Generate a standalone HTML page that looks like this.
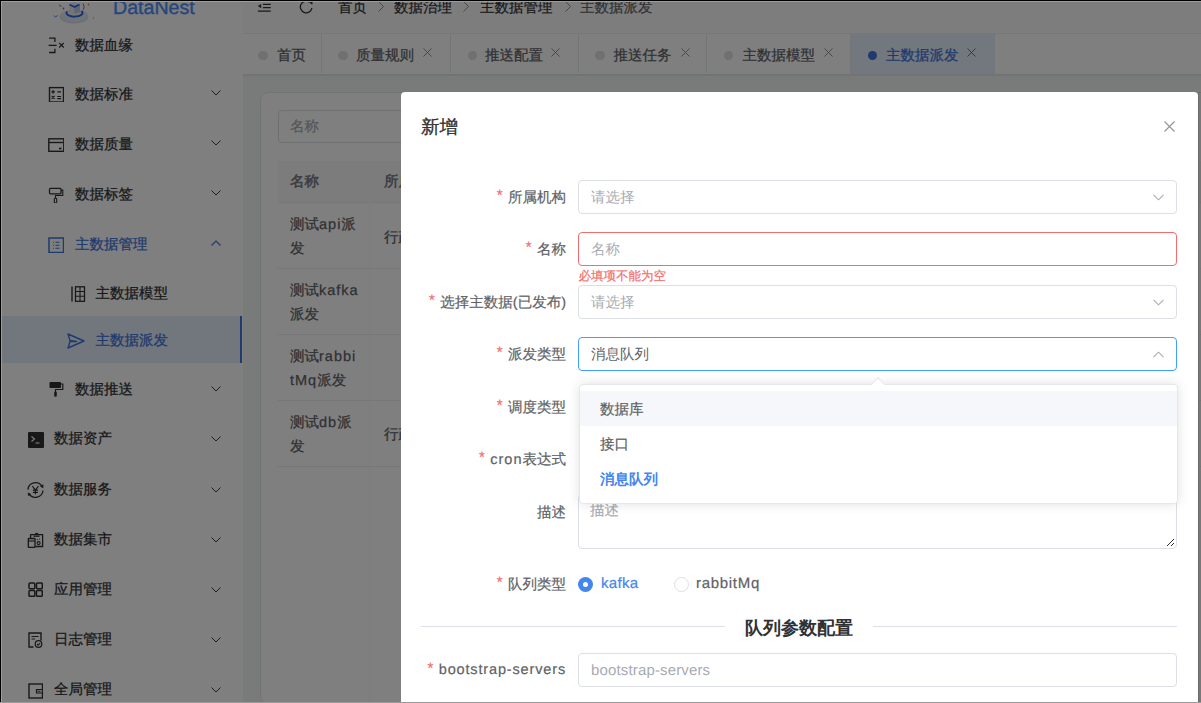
<!DOCTYPE html>
<html><head><meta charset="utf-8">
<style>
*{box-sizing:border-box;margin:0;padding:0}
html,body{width:1201px;height:703px;overflow:hidden;background:#fff;font-family:"Liberation Sans",sans-serif;color:#303133;-webkit-text-stroke-width:0.2px;text-rendering:geometricPrecision}
.a{position:absolute;white-space:nowrap}
#side{position:absolute;left:0;top:0;width:243px;height:703px;background:#fff;border-right:none}
#main{position:absolute;left:243px;top:0;width:958px;height:703px;background:#f3f4f5}
.mi{position:absolute;font-size:14.5px;line-height:20px;color:#303133;margin-top:0.7px}
.ic{position:absolute;width:16px;height:16px}
.chev{position:absolute;left:211px;width:10px;height:6px}
.tab{position:absolute;top:34px;height:39px;border-right:1px solid #e8eaee;background:#fff}
.tab .d{position:absolute;top:50.5px;margin-top:-34px;width:9.5px;height:9.5px;border-radius:50%;background:#dfe1e5}
.tab .t{position:absolute;top:11.7px;font-size:14.5px;line-height:20px;color:#606266}
.tab .x{position:absolute;top:14.4px;width:9px;height:9px}
#ov{position:absolute;left:0;top:0;width:1201px;height:703px;background:rgba(0,0,0,.5)}
#modal{position:absolute;left:401px;top:92px;width:797px;height:640px;background:#fff;border-radius:4px}
.lbl{position:absolute;right:0;font-size:15px;line-height:20px;color:#606266;text-align:right}
.req{color:#f56c6c;margin-right:5.5px;font-size:15px;position:relative;top:-1.5px}
.L1{letter-spacing:1px}
.mi,.tab .t{-webkit-text-stroke-width:0.25px}
.inp{position:absolute;left:578px;width:599px;height:33.5px;border:1px solid #dcdfe6;border-radius:4px;background:#fff}
.ph{position:absolute;left:12px;top:7.2px;font-size:14.5px;line-height:20px;color:#a8abb2;-webkit-text-stroke-width:0}
</style></head><body>

<div id="side">
  <!-- logo -->
  <svg class="a" style="left:50px;top:0" width="50" height="28" viewBox="0 0 50 28">
    <defs><radialGradient id="pg" cx="50%" cy="40%" r="60%"><stop offset="0" stop-color="#f4f6fa"/><stop offset="0.7" stop-color="#e3e8f0"/><stop offset="1" stop-color="#cfd6e2"/></radialGradient></defs>
    <ellipse cx="24" cy="16.5" rx="14.3" ry="7" fill="url(#pg)"/>
    <ellipse cx="24" cy="15" rx="10" ry="4.5" fill="none" stroke="#dfe5ee" stroke-width="1.5"/>
    <path d="M17 11.5A8 3.8 0 1 0 31.5 11" fill="none" stroke="#2f63e6" stroke-width="2"/>
    <path d="M19 4.5L24.5 2L30 4.5V12L24.5 14L19 12Z" fill="#e2e8f3"/>
    <path d="M24.5 7V14L30 12V4.5Z" fill="#c3cde0"/>
    <path d="M19.5 4.5L24.5 7L29.5 4.5" fill="none" stroke="#2f63e6" stroke-width="1.6"/>
    <path d="M9 5l2.5 1.5" stroke="#e0903a" stroke-width="1.2"/>
    <circle cx="38.5" cy="4.5" r="0.9" fill="#e0903a"/>
    <circle cx="13.5" cy="8.5" r="0.9" fill="#4a7ae8"/>
    <path d="M4 15.5l1.5 1.5 2-1.5" fill="none" stroke="#4a7ae8" stroke-width="1"/>
    <path d="M33 3.5q2 3 0.5 6" fill="none" stroke="#4a7ae8" stroke-width="1"/>
    <circle cx="43.5" cy="18" r="0.7" fill="#9aa6c0"/>
  </svg>
  <div class="a" style="left:113px;top:-4px;font-size:19.6px;line-height:24px;color:#4a8cf5;-webkit-text-stroke-width:0.35px">DataNest</div>

  <!-- level-1 items -->
  <svg class="ic" style="left:48px;top:37px;overflow:visible" viewBox="0 0 16 16"><path d="M1.1 1.1H6.9V4.9M0.6 8.3H8.6M6.9 11.7V15.5H1.1" fill="none" stroke="#303133" stroke-width="1.3"/><path d="M11.2 5.9L15.8 10.5M15.8 5.9L11.2 10.5" stroke="#303133" stroke-width="1.2"/></svg>
  <div class="mi" style="left:75px;top:35px">数据血缘</div>

  <svg class="ic" style="left:48px;top:86px" viewBox="0 0 16 16"><rect x="1.5" y="1.6" width="14" height="14.4" fill="none" stroke="#303133" stroke-width="1.4"/><path d="M3.3 5.9h3.6M5.1 4.1v3.6M9.3 5.9h3.7M3.6 9.9l3 3M6.6 9.9l-3 3M9.3 10.5h3.7M9.3 12.6h3.7" stroke="#303133" stroke-width="1.1"/></svg>
  <div class="mi" style="left:75px;top:84px">数据标准</div>
  <svg class="chev" style="top:90px" viewBox="0 0 10 6"><path d="M0.5 0.5L5 5L9.5 0.5" fill="none" stroke="#303133" stroke-width="0.95"/></svg>

  <svg class="ic" style="left:48px;top:137px" viewBox="0 0 16 14"><rect x="0.8" y="0.8" width="15" height="12.5" fill="none" stroke="#303133" stroke-width="1.4"/><path d="M1 4.5h14" stroke="#303133" stroke-width="1.4"/><path d="M11 10.5h2.5" stroke="#303133" stroke-width="1.6"/></svg>
  <div class="mi" style="left:75px;top:134px">数据质量</div>
  <svg class="chev" style="top:140px" viewBox="0 0 10 6"><path d="M0.5 0.5L5 5L9.5 0.5" fill="none" stroke="#303133" stroke-width="0.95"/></svg>

  <svg class="ic" style="left:48px;top:187px" viewBox="0 0 16 16"><rect x="1.5" y="1.3" width="11.5" height="5.5" rx="1" fill="none" stroke="#303133" stroke-width="1.3"/><path d="M13 3h1.8v5.5H7.5v3" fill="none" stroke="#303133" stroke-width="1.1"/><rect x="6.3" y="11" width="2.4" height="5" rx="1.2" fill="none" stroke="#303133" stroke-width="1.1"/></svg>
  <div class="mi" style="left:75px;top:184px">数据标签</div>
  <svg class="chev" style="top:190px" viewBox="0 0 10 6"><path d="M0.5 0.5L5 5L9.5 0.5" fill="none" stroke="#303133" stroke-width="0.95"/></svg>

  <svg class="ic" style="left:48px;top:237px" viewBox="0 0 16 16"><rect x="1" y="1" width="14.5" height="14.5" fill="none" stroke="#3c74dc" stroke-width="1.5"/><path d="M5 5.3h1M7.5 5.3h4M5 8.3h1M7.5 8.3h4M5 11.3h1M7.5 11.3h4" stroke="#3c74dc" stroke-width="1.1"/></svg>
  <div class="mi" style="left:75px;top:234px;color:#3c74dc">主数据管理</div>
  <svg class="chev" style="top:240px" viewBox="0 0 10 6"><path d="M0.5 5.5L5 1L9.5 5.5" fill="none" stroke="#3c74dc" stroke-width="1.1"/></svg>

  <svg class="ic" style="left:70px;top:286px" viewBox="0 0 14 16"><path d="M1 0.5v15" stroke="#303133" stroke-width="1.4"/><rect x="4.5" y="0.8" width="9" height="14.5" fill="none" stroke="#303133" stroke-width="1.3"/><path d="M9 1v14M4.5 5.5h9M4.5 10.3h9" stroke="#303133" stroke-width="1.1"/></svg>
  <div class="mi" style="left:95.5px;top:283px">主数据模型</div>

  <div class="a" style="left:0;top:316px;width:240px;height:47px;background:#e5ecfb"></div>
  <div class="a" style="left:240px;top:316px;width:2px;height:47px;background:#3c74dc"></div>
  <svg class="ic" style="left:67px;top:333px;width:18px" viewBox="0 0 18 16"><path d="M1 1L17 8L1 15L3 8.5H9.5L3 7.5Z" fill="none" stroke="#3c74dc" stroke-width="1.4" stroke-linejoin="round"/></svg>
  <div class="mi" style="left:95.5px;top:330px;color:#3c74dc">主数据派发</div>

  <svg class="ic" style="left:48px;top:381px" viewBox="0 0 16 16"><rect x="1.5" y="1" width="11.5" height="6" rx="1" fill="#303133"/><path d="M13 3h1.8v5.5H7.5v3" fill="none" stroke="#303133" stroke-width="1.2"/><rect x="6.2" y="10.5" width="2.6" height="5.3" rx="1.3" fill="#303133"/></svg>
  <div class="mi" style="left:75px;top:379px">数据推送</div>
  <svg class="chev" style="top:386px" viewBox="0 0 10 6"><path d="M0.5 0.5L5 5L9.5 0.5" fill="none" stroke="#303133" stroke-width="0.95"/></svg>

  <!-- level-0 -->
  <svg class="ic" style="left:28px;top:432px" viewBox="0 0 16 16"><rect x="0" y="0" width="16" height="16" rx="1" fill="#303133"/><path d="M3.5 4.5l3 2.5-3 2.5" fill="none" stroke="#fff" stroke-width="1.1"/><path d="M7.5 11h4" stroke="#fff" stroke-width="1.1"/></svg>
  <div class="mi" style="left:54px;top:428px">数据资产</div>
  <svg class="chev" style="top:436px" viewBox="0 0 10 6"><path d="M0.5 0.5L5 5L9.5 0.5" fill="none" stroke="#303133" stroke-width="0.95"/></svg>

  <svg class="a" style="left:26px;top:480px" width="19" height="19" viewBox="0 0 19 19"><path d="M1.9 9.6A7.6 7.6 0 0 1 16.0 6.4" fill="none" stroke="#303133" stroke-width="1.3"/><path d="M14.0 6.6L17.4 4.3L17.3 8.3Z" fill="#303133"/><path d="M17.0 10.5A7.6 7.6 0 0 1 2.9 13.6" fill="none" stroke="#303133" stroke-width="1.3"/><path d="M1.6 12.4L5.2 14.0L2.3 16.2Z" fill="#303133"/><path d="M6.3 6L9.4 10.2L12.5 6M9.4 10.2V14.3M6.9 10.2H11.9M6.9 12.4H11.9" fill="none" stroke="#303133" stroke-width="1.2"/></svg>
  <div class="mi" style="left:54px;top:479px">数据服务</div>
  <svg class="chev" style="top:487px" viewBox="0 0 10 6"><path d="M0.5 0.5L5 5L9.5 0.5" fill="none" stroke="#303133" stroke-width="0.95"/></svg>

  <svg class="a" style="left:27px;top:532px" width="17" height="17" viewBox="0 0 17 17"><path d="M3.6 6V2.6H15.6V14.5H8.3" fill="none" stroke="#303133" stroke-width="1.3"/><path d="M6.5 4.2H12.6" stroke="#303133" stroke-width="1.3"/><path d="M8.3 2.6A1.3 1.3 0 0 1 10.9 2.6" fill="none" stroke="#303133" stroke-width="1.2"/><rect x="1.3" y="6.5" width="6.7" height="8.9" rx="0.6" fill="#808080" fill-opacity="0" stroke="#303133" stroke-width="1.3"/><path d="M1.5 9H7.8" stroke="#303133" stroke-width="1.1"/><circle cx="11.6" cy="11.1" r="1.5" fill="none" stroke="#303133" stroke-width="1.1"/><circle cx="10.3" cy="7.6" r="0.6" fill="#303133"/><circle cx="12.6" cy="7.1" r="0.6" fill="#303133"/></svg>
  <div class="mi" style="left:54px;top:529px">数据集市</div>
  <svg class="chev" style="top:537px" viewBox="0 0 10 6"><path d="M0.5 0.5L5 5L9.5 0.5" fill="none" stroke="#303133" stroke-width="0.95"/></svg>

  <svg class="ic" style="left:28px;top:582px;width:15px;height:15px" viewBox="0 0 15 15"><rect x="1" y="1" width="5.8" height="5.8" rx="1" fill="none" stroke="#303133" stroke-width="1.5"/><rect x="8.5" y="1" width="5.8" height="5.8" rx="1" fill="none" stroke="#303133" stroke-width="1.5"/><rect x="1" y="8.5" width="5.8" height="5.8" rx="1" fill="none" stroke="#303133" stroke-width="1.5"/><rect x="8.5" y="8.5" width="5.8" height="5.8" rx="1" fill="none" stroke="#303133" stroke-width="1.5"/></svg>
  <div class="mi" style="left:54px;top:579px">应用管理</div>
  <svg class="chev" style="top:587px" viewBox="0 0 10 6"><path d="M0.5 0.5L5 5L9.5 0.5" fill="none" stroke="#303133" stroke-width="0.95"/></svg>

  <svg class="ic" style="left:28px;top:632px;width:15px;height:16px" viewBox="0 0 15 16"><path d="M5.5 15H1V1h12v7.5" fill="none" stroke="#303133" stroke-width="1.4"/><path d="M3.5 4.5h7M3.5 7h3.5" stroke="#303133" stroke-width="1.2"/><circle cx="10.5" cy="12" r="3.3" fill="none" stroke="#303133" stroke-width="1.2"/><path d="M9 12l1.2 1.2 2-2.2" fill="none" stroke="#303133" stroke-width="1.1"/></svg>
  <div class="mi" style="left:54px;top:629px">日志管理</div>
  <svg class="chev" style="top:637px" viewBox="0 0 10 6"><path d="M0.5 0.5L5 5L9.5 0.5" fill="none" stroke="#303133" stroke-width="0.95"/></svg>

  <svg class="ic" style="left:28px;top:683px;width:15px;height:16px" viewBox="0 0 15 16"><rect x="1" y="1" width="13.5" height="14" fill="none" stroke="#303133" stroke-width="1.4"/><path d="M14 6.5H8.5v3.5H14" fill="none" stroke="#303133" stroke-width="1.2"/><path d="M9.5 8.2h3" stroke="#303133" stroke-width="1"/></svg>
  <div class="mi" style="left:54px;top:679px">全局管理</div>
  <svg class="chev" style="top:687px" viewBox="0 0 10 6"><path d="M0.5 0.5L5 5L9.5 0.5" fill="none" stroke="#303133" stroke-width="0.95"/></svg>
</div>

<div id="main"></div>
<!-- header -->
<div class="a" style="left:243px;top:0;width:958px;height:34px;background:#fbfbfb;border-bottom:1px solid #eceef1"></div>
<svg class="a" style="left:257px;top:0" width="15" height="14" viewBox="0 0 15 14"><path d="M5.9 4.4h7.8M5.9 7.6h7.8M0.9 11.1h12.8M5.9 1.2h7.8" stroke="#303133" stroke-width="1.4"/><path d="M4.2 3.9L0.8 6.1L4.2 8.3z" fill="#303133"/></svg>
<svg class="a" style="left:298px;top:0" width="17" height="16" viewBox="0 0 17 16"><path d="M13.9 8.0A5.8 5.8 0 1 1 11.3 2.1" fill="none" stroke="#303133" stroke-width="1.3"/><path d="M10.2 1.3L14.8 0.9L14.2 4.8Z" fill="#303133"/></svg>
<div class="a" style="left:338px;top:-2px;font-size:14.5px;line-height:20px;color:#303133">首页</div>
<svg class="a" style="left:378px;top:1px" width="6" height="11" viewBox="0 0 6 11"><path d="M0.5 0.5L5.5 5.5L0.5 10.5" fill="none" stroke="#909399" stroke-width="1"/></svg>
<div class="a" style="left:394px;top:-2px;font-size:14.5px;line-height:20px;color:#303133">数据治理</div>
<svg class="a" style="left:463px;top:1px" width="6" height="11" viewBox="0 0 6 11"><path d="M0.5 0.5L5.5 5.5L0.5 10.5" fill="none" stroke="#909399" stroke-width="1"/></svg>
<div class="a" style="left:480px;top:-2px;font-size:14.5px;line-height:20px;color:#303133">主数据管理</div>
<svg class="a" style="left:565px;top:1px" width="6" height="11" viewBox="0 0 6 11"><path d="M0.5 0.5L5.5 5.5L0.5 10.5" fill="none" stroke="#909399" stroke-width="1"/></svg>
<div class="a" style="left:580px;top:-2px;font-size:14.5px;line-height:20px;color:#606266">主数据派发</div>

<!-- tabs -->
<div class="a" style="left:243px;top:34px;width:958px;height:41.5px;background:#fff;border-bottom:2.5px solid #e4e6ea"></div>
<div class="tab" style="left:243px;width:79px"><span class="d" style="left:15px"></span><span class="t" style="left:34px">首页</span></div>
<div class="tab" style="left:322px;width:129px"><span class="d" style="left:16px"></span><span class="t" style="left:34px">质量规则</span><svg class="x" style="left:101px" viewBox="0 0 9 9"><path d="M0.5 0.5l8 8M8.5 0.5l-8 8" stroke="#909399" stroke-width="1"/></svg></div>
<div class="tab" style="left:451px;width:128px"><span class="d" style="left:16.5px"></span><span class="t" style="left:34px">推送配置</span><svg class="x" style="left:100px" viewBox="0 0 9 9"><path d="M0.5 0.5l8 8M8.5 0.5l-8 8" stroke="#909399" stroke-width="1"/></svg></div>
<div class="tab" style="left:579px;width:128px"><span class="d" style="left:16px"></span><span class="t" style="left:34.5px">推送任务</span><svg class="x" style="left:101.5px" viewBox="0 0 9 9"><path d="M0.5 0.5l8 8M8.5 0.5l-8 8" stroke="#909399" stroke-width="1"/></svg></div>
<div class="tab" style="left:707px;width:144px"><span class="d" style="left:16.75px"></span><span class="t" style="left:35.5px">主数据模型</span><svg class="x" style="left:116.75px" viewBox="0 0 9 9"><path d="M0.5 0.5l8 8M8.5 0.5l-8 8" stroke="#909399" stroke-width="1"/></svg></div>
<div class="tab" style="left:851px;width:144px;height:39.5px;background:#e6eefc;border-right:none"><span class="d" style="left:16.5px;background:#3c74dc"></span><span class="t" style="left:35px;color:#3c74dc">主数据派发</span><svg class="x" style="left:116px" viewBox="0 0 9 9"><path d="M0.5 0.5l8 8M8.5 0.5l-8 8" stroke="#3c74dc" stroke-width="1"/></svg></div>

<!-- card -->
<div class="a" style="left:260px;top:92px;width:960px;height:612px;background:#fff;border:1px solid #e4e7ed;border-radius:8px"></div>
<div class="a" style="left:278px;top:110px;width:300px;height:33px;border:1px solid #dcdfe6;border-radius:4px"></div>
<div class="a" style="left:290px;top:117px;font-size:14.5px;line-height:20px;color:#a8abb2">名称</div>
<div class="a" style="left:278px;top:161px;width:940px;height:42px;background:#f8f9fb;border-bottom:1px solid #ebeef5"></div>
<div class="a" style="left:290px;top:172px;font-size:14.5px;line-height:20px;color:#7d8086;font-weight:bold;-webkit-text-stroke-width:0">名称</div>
<div class="a" style="left:384px;top:172px;font-size:14.5px;line-height:20px;color:#7d8086;font-weight:bold;-webkit-text-stroke-width:0">所属机构</div>
<div class="a" style="left:278px;top:268px;width:940px;height:1px;background:#ebeef5"></div>
<div class="a" style="left:278px;top:334px;width:940px;height:1px;background:#ebeef5"></div>
<div class="a" style="left:278px;top:400px;width:940px;height:1px;background:#ebeef5"></div>
<div class="a" style="left:278px;top:466px;width:940px;height:1px;background:#ebeef5"></div>
<div class="a" style="left:369px;top:161px;width:1px;height:540px;background:#f7f8fa"></div>
<div class="a" style="left:290px;top:213px;font-size:14.5px;line-height:24px;color:#606266;-webkit-text-stroke-width:0.25px;white-space:normal;width:72px">测试<span class="L1">api</span>派<br>发</div>
<div class="a" style="left:290px;top:279px;font-size:14.5px;line-height:24px;color:#606266;-webkit-text-stroke-width:0.25px">测试<span class="L1">kafka</span><br>派发</div>
<div class="a" style="left:290px;top:345px;font-size:14.5px;line-height:24px;color:#606266;-webkit-text-stroke-width:0.25px">测试<span class="L1">rabbi</span><br><span class="L1">tMq</span>派发</div>
<div class="a" style="left:290px;top:411px;font-size:14.5px;line-height:24px;color:#606266;-webkit-text-stroke-width:0.25px">测试<span class="L1">db</span>派<br>发</div>
<div class="a" style="left:384px;top:226px;font-size:14.5px;line-height:24px;color:#606266;-webkit-text-stroke-width:0.25px">行政</div>
<div class="a" style="left:384px;top:423px;font-size:14.5px;line-height:24px;color:#606266;-webkit-text-stroke-width:0.25px">行政</div>

<div id="ov"></div>
<div id="modal"></div>
<div class="a" style="left:421px;top:116px;font-size:18.5px;line-height:22px;color:#303133;-webkit-text-stroke-width:0.3px">新增</div>
<svg class="a" style="left:1164px;top:121px" width="11" height="11" viewBox="0 0 11 11"><path d="M0.5 0.5l10 10M10.5 0.5l-10 10" stroke="#909399" stroke-width="1.1"/></svg>

<div class="a" style="left:400px;top:187.8px;width:166px;text-align:right;font-size:14.5px;line-height:20px;color:#606266"><span class="req">*</span>所属机构</div>
<div class="inp" style="top:180px"><span class="ph">请选择</span><svg class="a" style="left:574px;top:13px" width="11" height="7" viewBox="0 0 11 7"><path d="M0.5 0.8L5.5 5.8L10.5 0.8" fill="none" stroke="#a8abb2" stroke-width="1.1"/></svg></div>

<div class="a" style="left:400px;top:239.8px;width:166px;text-align:right;font-size:14.5px;line-height:20px;color:#606266"><span class="req">*</span>名称</div>
<div class="inp" style="top:232px;border-color:#f56c6c"><span class="ph">名称</span></div>
<div class="a" style="left:578.5px;top:267.7px;font-size:12.5px;line-height:16px;color:#f56c6c">必填项不能为空</div>

<div class="a" style="left:400px;top:292.8px;width:166px;text-align:right;font-size:14.5px;line-height:20px;color:#606266"><span class="req">*</span>选择主数据(已发布)</div>
<div class="inp" style="top:285px"><span class="ph">请选择</span><svg class="a" style="left:574px;top:13px" width="11" height="7" viewBox="0 0 11 7"><path d="M0.5 0.8L5.5 5.8L10.5 0.8" fill="none" stroke="#a8abb2" stroke-width="1.1"/></svg></div>

<div class="a" style="left:400px;top:344.8px;width:166px;text-align:right;font-size:14.5px;line-height:20px;color:#606266"><span class="req">*</span>派发类型</div>
<div class="inp" style="top:337px;border-color:#409eff"><span class="ph" style="color:#606266">消息队列</span><svg class="a" style="left:574px;top:13px" width="11" height="7" viewBox="0 0 11 7"><path d="M0.5 6.2L5.5 1.2L10.5 6.2" fill="none" stroke="#a8abb2" stroke-width="1.1"/></svg></div>

<div class="a" style="left:400px;top:397.8px;width:166px;text-align:right;font-size:14.5px;line-height:20px;color:#606266"><span class="req">*</span>调度类型</div>
<div class="a" style="left:400px;top:449.8px;width:166px;text-align:right;font-size:14.5px;line-height:20px;color:#606266"><span class="req">*</span><span class="L1">cron</span>表达式</div>

<div class="a" style="left:400px;top:502.8px;width:166px;text-align:right;font-size:14.5px;line-height:20px;color:#606266">描述</div>
<div class="a" style="left:578px;top:494px;width:599px;height:54.5px;border:1px solid #dcdfe6;border-radius:4px"></div>
<div class="a" style="left:590px;top:501px;font-size:14.5px;line-height:20px;color:#a8abb2">描述</div>
<svg class="a" style="left:1166px;top:538px" width="9" height="9" viewBox="0 0 9 9"><path d="M1 8L8 1M5 8L8 5" stroke="#303133" stroke-width="1"/></svg>

<!-- dropdown -->
<div class="a" style="left:578.5px;top:383.5px;width:599px;height:120px;background:#fff;border:1px solid #e4e7ed;border-radius:4px;box-shadow:0 0 12px rgba(0,0,0,.12)"></div>
<div class="a" style="left:872.5px;top:379px;width:10px;height:10px;background:#fff;border-left:1px solid #e4e7ed;border-top:1px solid #e4e7ed;transform:rotate(45deg)"></div>
<div class="a" style="left:579.5px;top:391px;width:597px;height:35px;background:#f5f7fa"></div>
<div class="a" style="left:600px;top:399.5px;font-size:14.5px;line-height:20px;color:#606266">数据库</div>
<div class="a" style="left:600px;top:435px;font-size:14.5px;line-height:20px;color:#606266">接口</div>
<div class="a" style="left:600px;top:470px;font-size:14.5px;line-height:20px;color:#4387ee;font-weight:bold;-webkit-text-stroke-width:0">消息队列</div>

<div class="a" style="left:400px;top:574.8px;width:166px;text-align:right;font-size:14.5px;line-height:20px;color:#606266"><span class="req">*</span>队列类型</div>
<div class="a" style="left:578px;top:577px;width:15px;height:15px;border-radius:50%;background:#4387ee"></div>
<div class="a" style="left:583px;top:582px;width:5px;height:5px;border-radius:50%;background:#fff"></div>
<div class="a" style="left:601px;top:574px;font-size:15px;line-height:20px;color:#4387ee;letter-spacing:0.3px">kafka</div>
<div class="a" style="left:674px;top:577px;width:15px;height:15px;border-radius:50%;border:1px solid #dcdfe6"></div>
<div class="a" style="left:696px;top:574px;font-size:15px;line-height:20px;color:#606266;letter-spacing:0.7px">rabbitMq</div>

<div class="a" style="left:421px;top:626px;width:756px;height:1px;background:#dcdfe6"></div>
<div class="a" style="left:725px;top:616px;width:148px;height:24px;background:#fff;text-align:center;font-size:18px;line-height:24px;font-weight:bold;color:#303133;-webkit-text-stroke-width:0">队列参数配置</div>

<div class="a" style="left:400px;top:660px;width:166px;text-align:right;font-size:14.5px;line-height:20px;color:#606266;letter-spacing:0.85px"><span class="req" style="margin-right:4.5px">*</span>bootstrap-servers</div>
<div class="inp" style="top:653px"><span class="ph" style="font-size:15px;letter-spacing:0.15px">bootstrap-servers</span></div>

<!-- frame -->
<div class="a" style="left:1198px;top:92px;width:1px;height:611px;background:#6c6c6c"></div>
<div class="a" style="left:1199px;top:92px;width:2px;height:611px;background:rgba(0,0,0,.05)"></div>
<div class="a" style="left:0;top:0;width:1201px;height:1px;background:#000"></div>
<div class="a" style="left:0;top:0;width:1px;height:703px;background:#000"></div>
<div class="a" style="left:1px;top:1px;width:1200px;height:1px;background:#9d9d9d"></div>
<div class="a" style="left:1px;top:1px;width:1px;height:702px;background:#9d9d9d"></div>
<div class="a" style="left:0;top:702px;width:1201px;height:1px;background:#9a9a9a"></div>
</body></html>
